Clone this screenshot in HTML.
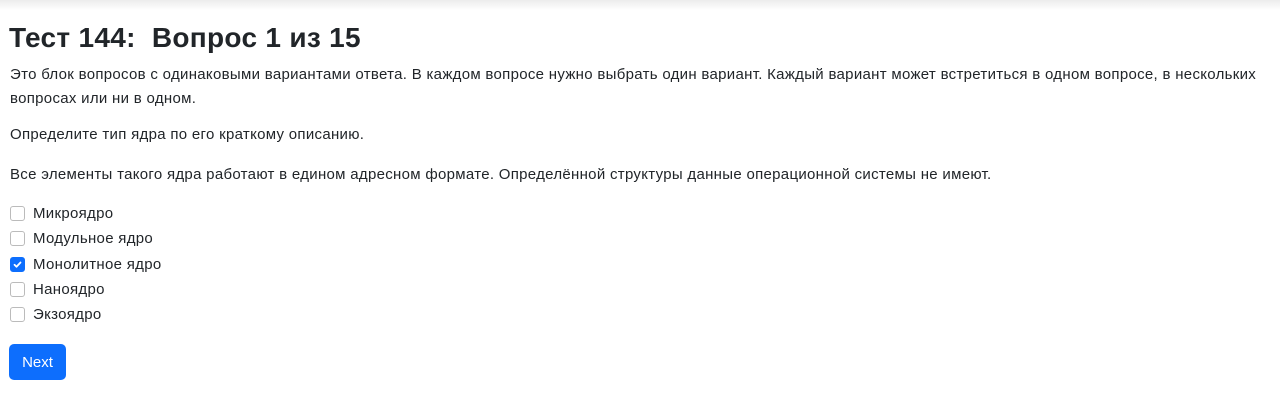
<!DOCTYPE html>
<html><head><meta charset="utf-8"><style>
body{margin:0;background:#fff;font-family:"Liberation Sans",sans-serif;color:#212529;font-size:15px;width:1280px;height:411px;overflow:hidden;position:relative}
.top{position:absolute;left:0;top:0;width:1280px;height:10px;background:linear-gradient(#ececec,#fff)}
.a{position:absolute;left:10px;white-space:nowrap;letter-spacing:0.3px}
h1{position:absolute;left:9px;top:18px;margin:0;font-size:28px;font-weight:600;line-height:40px;color:#212529;letter-spacing:0.3px}
.cb{position:absolute;left:10px;width:13px;height:13px;border:1px solid #bbb;border-radius:3px;background:#fff}
.cb.on{background:#0d6efd;border-color:#0d6efd}
.opt{position:absolute;left:33px;white-space:nowrap;line-height:20px;letter-spacing:0.3px}
.btn{position:absolute;left:9px;top:344px;width:57px;height:36px;background:#0d6efd;border-radius:5px;color:#fff;font-size:15px;line-height:38px;text-align:center}
</style></head><body>
<div class="top"></div>
<h1>Тест 144:&nbsp; Вопрос 1 из 15</h1>
<div class="a" style="top:65px;line-height:20px">Это блок вопросов с одинаковыми вариантами ответа. В каждом вопросе нужно выбрать один вариант. Каждый вариант может встретиться в одном вопросе, в нескольких</div>
<div class="a" style="top:89px;line-height:20px">вопросах или ни в одном.</div>
<div class="a" style="top:125px;line-height:20px">Определите тип ядра по его краткому описанию.</div>
<div class="a" style="top:165px;line-height:20px">Все элементы такого ядра работают в едином адресном формате. Определённой структуры данные операционной системы не имеют.</div>
<div class="cb" style="top:206px"></div><div class="opt" style="top:204px">Микроядро</div>
<div class="cb" style="top:231px"></div><div class="opt" style="top:229px">Модульное ядро</div>
<div class="cb on" style="top:257px"><svg width="13" height="13" viewBox="0 0 13 13"><path d="M3.5 6.8l2 2 4-4.3" stroke="#fff" stroke-width="1.8" fill="none" stroke-linecap="round" stroke-linejoin="round"/></svg></div><div class="opt" style="top:255px">Монолитное ядро</div>
<div class="cb" style="top:282px"></div><div class="opt" style="top:280px">Наноядро</div>
<div class="cb" style="top:307px"></div><div class="opt" style="top:305px">Экзоядро</div>
<div class="btn">Next</div>
</body></html>
